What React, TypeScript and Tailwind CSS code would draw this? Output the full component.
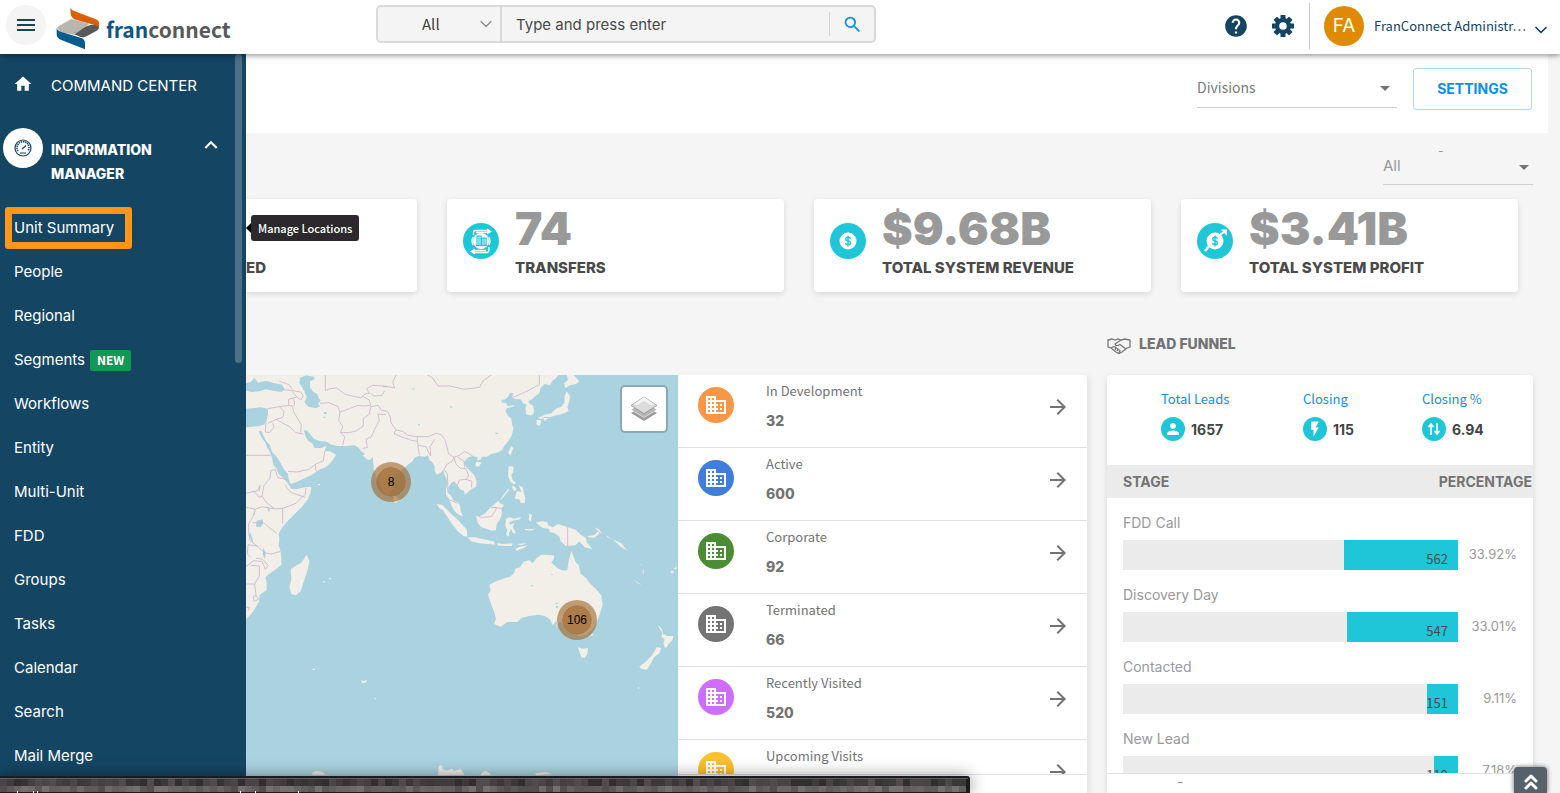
import React from 'react';
import {
  MdArrowDropDown,
  MdArrowForward,
  MdBusiness,
  MdFlashOn,
  MdHelp,
  MdHome,
  MdKeyboardArrowUp,
  MdMenu,
  MdPerson,
  MdSearch,
} from 'react-icons/md';
import { ChevronDown, ChevronsUp } from 'lucide-react';

const NAV_ITEMS = [
  'Unit Summary',
  'People',
  'Regional',
  'Segments',
  'Workflows',
  'Entity',
  'Multi-Unit',
  'FDD',
  'Groups',
  'Tasks',
  'Calendar',
  'Search',
  'Mail Merge',
];

const STATUSES = [
  { label: 'In Development', count: 32, color: 'bg-[#f89747]' },
  { label: 'Active', count: 600, color: 'bg-[#3f7edb]' },
  { label: 'Corporate', count: 92, color: 'bg-[#4b8d32]' },
  { label: 'Terminated', count: 66, color: 'bg-[#747474]' },
  { label: 'Recently Visited', count: 520, color: 'bg-[#cf6dff]' },
  { label: 'Upcoming Visits', color: 'bg-[#fbc02d]' },
];

const STAGES = [
  { label: 'FDD Call', count: 562, percent: 33.92 },
  { label: 'Discovery Day', count: 547, percent: 33.01 },
  { label: 'Contacted', count: 151, percent: 9.11 },
  { label: 'New Lead', count: 119, percent: 7.18 },
];

// Land masses, three units per pixel
const LAND = [
  // Eurasia and Africa
  'M0 0H940L928 14L918 22L912 34L896 30L884 42L880 58L868 66L858 76L846 82L852 90L862 96L864 116L858 124L842 122L838 104L842 92L830 86L824 76L808 76L798 70L802 58L792 56L788 66L778 76L766 78L768 86L780 86L784 96L804 94L802 98L784 102L778 112L786 126L796 134L798 148L802 164L798 182L788 200L776 214L768 228L752 236L736 240L722 248L708 248L704 256L694 260L694 250L680 246L668 250L658 258L654 266L660 278L672 290L684 302L692 322L690 338L676 346L666 354L656 362L654 350L642 346L634 334L624 322L616 326L608 340L606 356L616 366L622 380L634 384L642 394L644 410L650 426L640 424L626 412L616 394L610 376L600 362L600 346L604 330L602 316L596 304L592 288L584 296L572 302L566 292L566 276L558 264L550 258L546 244L536 248L518 246L504 252L500 262L488 270L478 280L460 294L444 304L440 322L440 344L430 358L424 366L414 356L404 334L392 310L384 290L382 270L380 248L372 258L362 256L350 244L358 240L346 232L338 222L326 214L300 216L272 216L252 210L244 204L240 216L236 232L252 232L270 242L262 256L250 270L240 280L222 286L210 294L196 304L172 314L152 324L134 330L128 316L126 300L114 286L104 268L92 248L78 234L72 214L60 200L52 184L46 170L38 172L46 190L58 206L64 222L72 234L78 252L82 272L92 284L98 300L112 312L124 326L136 344L152 346L176 340L196 338L194 354L186 374L170 396L150 416L128 438L112 456L98 478L100 496L98 514L104 532L106 552L106 572L92 584L74 596L58 610L62 628L62 648L50 656L40 664L40 682L28 702L14 722L0 736Z',
  // Madagascar
  'M182 542L190 562L186 584L176 614L164 652L150 664L136 660L130 640L136 616L134 586L152 574L166 566L174 554Z',
  // Sri Lanka
  'M442 364L454 368L460 378L448 388L442 380Z',
  // Sumatra
  'M572 390L588 392L604 408L620 424L636 438L650 454L662 466L664 488L652 486L634 470L618 450L604 428L592 410L580 402Z',
  // Java and the islands east of it
  'M664 490L686 490L706 494L724 498L742 502L748 512L724 510L700 508L676 502Z',
  'M754 508L772 510L800 508L798 516L772 516L754 514Z M812 510L842 508L826 514Z M808 524L822 518L846 514L834 522L812 530Z',
  // Borneo
  'M690 426L704 426L718 418L734 400L746 390L756 380L762 388L774 394L766 404L768 420L762 436L752 450L750 468L736 470L722 464L706 460L696 448Z',
  // Sulawesi
  'M780 434L790 430L804 434L826 430L822 436L800 440L788 446L794 452L806 446L800 458L810 478L802 478L794 464L790 476L788 488L780 482L784 468L778 456Z',
  // Moluccas
  'M850 418L858 424L854 444L848 436Z M836 464L850 466L870 464L856 470L838 468Z',
  // Philippines
  'M788 276L802 278L802 294L796 304L800 318L810 326L804 332L792 322L786 306Z M800 334L812 344L806 352L798 342Z M818 334L830 340L834 356L826 352Z M812 352L832 354L838 372L836 388L824 386L820 376L806 374Z M786 344L790 348L768 374L762 378Z',
  // Taiwan and Hainan
  'M796 216L802 222L794 244L786 236Z M690 264L706 264L700 278L688 276Z',
  // Papua
  'M870 446L884 442L904 444L906 454L920 460L936 450L966 460L990 468L1004 482L1020 492L1022 504L1040 526L1016 520L1000 502L988 514L960 516L944 502L940 488L926 478L912 474L908 464L890 462Z',
  'M1024 486L1044 484L1056 472L1060 480L1044 492L1028 490Z M1044 460L1060 466L1068 480L1060 474Z M1080 484L1098 496L1084 490Z M1100 496L1126 508L1144 530L1124 518Z',
  // Australia
  'M976 530L982 546L990 566L998 572L1004 600L1020 612L1030 626L1044 640L1052 648L1066 664L1070 692L1064 712L1056 736L1040 766L1020 782L1000 786L976 776L958 764L950 748L938 744L930 764L934 738L920 754L912 736L896 726L878 722L850 726L826 732L814 744L784 744L764 758L744 750L750 734L744 712L736 692L726 662L734 650L730 632L750 622L772 614L792 608L804 598L808 584L822 580L832 564L850 558L860 568L872 552L886 542L924 544L924 554L916 566L934 582L952 590L964 588L968 560Z',
  // Tasmania
  'M996 820L1012 824L1026 822L1024 840L1016 852L1006 850Z M1030 784L1040 778L1040 786Z',
  // New Zealand
  'M1234 752L1246 762L1252 780L1264 786L1282 786L1280 798L1268 810L1258 824L1252 808L1256 796L1246 788L1250 778Z M1232 820L1246 822L1240 838L1224 850L1214 870L1202 888L1186 884L1180 878L1202 860L1218 844Z',
  // Japan
  'M962 0L980 0L1000 22L990 30L972 34L958 42L954 28L966 18Z M962 52L972 66L970 82L964 98L968 112L948 120L930 124L912 130L896 128L886 136L876 132L896 122L916 118L930 104L946 98L956 84L956 66Z M872 138L886 138L882 156L872 152Z M892 132L906 132L896 142Z',
  // Scattered islands
  'M1160 614L1186 632L1178 630Z M1274 592L1284 590L1282 598L1274 596Z M1282 584L1294 578L1290 586Z M346 918L352 922L362 918L360 926L348 928Z M1184 566L1188 576L1184 572Z M1192 584L1194 604L1190 590Z M216 330H222V333H216Z M232 622H237V626H232Z M249 612H254V616H249Z M200 884H206V888H200Z M386 972H390V976H386Z M1176 940H1179V944H1176Z M34 116L50 114L46 122L38 122Z',
  // Antarctic coast
  'M198 1196L210 1191L228 1193L238 1202L200 1202Z M576 1204L578 1176L588 1174L590 1186L602 1190L618 1184L624 1190L642 1186L640 1178L646 1188L656 1202Z M706 1196L718 1190L732 1198L734 1204L704 1204Z M868 1197L900 1194L918 1200L870 1204Z',
];

// Seas and lakes lying inside the land masses
const WATER = [
  'M0 28L14 24L26 12L36 26L60 20L80 26L108 32L116 46L106 54L80 50L60 46L40 52L18 54L0 50Z',
  'M0 104L24 102L44 100L66 104L66 120L62 140L54 152L40 156L20 158L0 160Z',
  'M162 12L180 4L204 8L206 16L192 22L192 40L202 54L214 60L216 68L224 80L216 88L222 98L208 102L188 98L176 86L182 68L176 54L168 40L160 26Z',
  'M174 168L184 170L194 182L204 194L222 202L236 202L248 206L238 216L226 222L206 222L198 208L186 200L178 186Z',
  'M32 440L50 436L52 448L44 460L30 458Z M66 398L72 408L68 414L64 404Z M12 472L22 502L18 504L10 486Z M52 520L60 540L56 556L50 540Z M22 420L28 414L26 424Z',
  'M234 114H242V120H234Z M232 128H238V132H232Z M410 36L426 36L420 40H410Z M608 96L620 98L616 102Z M498 44L506 42L502 48Z M516 150H522V154H516Z M748 176H756V180H748Z M854 634H862V637H854Z M916 600H920V603H916Z M928 686H935V690H928Z M930 696H936V702H930Z',
];

const BORDERS =
  'M0 244H74 M100 22L130 32L140 50L164 54L172 66L164 78L148 64L136 50L110 46 M238 0L238 50L252 44L272 42L296 60L318 66L346 72L356 60L370 58L362 44L380 34L416 36L446 42L440 24L452 0 M222 88L250 86L276 98L282 114L310 104L336 94L356 96L374 94L370 78L348 66 M374 58L384 66L408 64L416 50 M282 114L278 140L290 156L284 176L310 176L332 170L352 156L352 134L370 120L374 98 M284 176L296 188L290 214 M374 98L396 94L406 108L424 112L434 130L434 144 M396 120L400 140L386 166L376 188L360 196L364 220L350 224 M396 120L420 122 M434 144L450 168L444 178L470 190L500 200L514 202L514 188L486 184L470 172L450 168 M514 188L546 188L570 178L586 182L596 196L602 214L608 240L624 250L640 244L656 232L680 246 M514 202L520 244 M516 214L540 218L546 232L554 246L552 218L566 196 M624 250L618 262L604 270L594 286L604 300L606 356 M624 250L630 270L642 282L660 284L668 306L660 316L640 318L634 334 M660 316L678 322L676 340 M636 250L654 262L656 280 M540 0L560 12L576 36L612 36L656 46L700 40L712 20L740 0 M800 70L816 64L846 50L880 32L880 0 M66 104L100 98L128 94L140 96L142 112L166 152L164 176 M128 94L128 76L150 70 M100 98L114 112L110 130L90 136L66 148 M60 146L58 174L70 176L84 160L80 148 M90 136L130 158L150 176L172 180 M126 292L154 294L188 286L210 270L232 260L236 232 M208 272L210 292 M74 290L88 286L94 308 M74 290L72 312L54 334L48 366L60 384L84 404L108 404L150 388L178 360L180 342 M118 334L124 344L136 356L178 370 M94 310L124 318 M48 366L40 370L24 352L0 358 M40 352L42 334L34 350L20 354 M84 404L48 398L28 406L0 400 M110 404L110 448 M28 406L20 430L8 450L8 474L12 500L34 516L54 536L76 540L104 532 M54 446L66 458L92 478 M20 446L52 446 M34 516L6 512L4 540L14 550 M30 552L50 556L66 574L58 586L48 562L22 560L0 578 M14 574L40 576L40 606L26 630L0 630 M26 630L30 664L38 676L24 682L22 668L32 664 M0 700L10 700L6 710 M140 74L146 84L144 96 M735 402L752 400L748 410L736 428L706 430L696 426 M740 400L774 404 M965 460V516 M612 378L634 388';

const SHADES = ['#3f3b3a', '#4a4645', '#363333', '#45403f', '#312e2e', '#514c4b', '#3b3838', '#484444'];
const LIGHTER_SHADES = ['#5f5f5f', '#6b6b6b', '#585858', '#666666', '#4f4f4f', '#717171', '#5b5b5b', '#626262'];

function pickShade(shades: string[], seed: number) {
  const noise = Math.abs(Math.sin(seed * 12.9898) * 43758.5453);
  return shades[Math.floor((noise % 1) * shades.length)];
}

function Logo() {
  return (
    <a href="#home" aria-label="franconnect" className="flex items-center gap-[6px]">
      <svg width="44" height="44" viewBox="0 0 132 132" className="mt-2" aria-hidden="true">
        <path d="M3 62Q6 58 14 54L46 36L100 50L58 84L14 76Z" fill="#b9b6ae" />
        <path d="M56 82L84 62Q92 56 104 54L129 50V62Q129 67 122 71L92 88Q84 93 74 90Z" fill="#58595b" />
        <path d="M43 2Q46 9 56 13L118 36Q129 40 129 48V64Q127 57 116 54L62 39Q46 35 44 20Z" fill="#d95f02" />
        <path d="M2 62Q4 71 16 75L74 92Q87 96 87 108V127L18 100Q2 94 2 82Z" fill="#075a8c" />
      </svg>
      <span className="pt-2 font-['Noto_Sans_CJK_SC','Open_Sans',sans-serif] text-[21px] leading-8 font-bold">
        <span className="text-[#0b5687]">fran</span>
        <span className="text-[#58595b]">connect</span>
      </span>
    </a>
  );
}

function GearIcon() {
  return (
    <svg width="22" height="22" viewBox="0 0 22 22" aria-hidden="true">
      <g fill="currentColor">
        {[0, 45, 90, 135].map((angle) => (
          <rect key={angle} x="8.500" y="0" width="5" height="22" rx=".6" transform={`rotate(${angle} 11 11)`} />
        ))}
        <circle cx="11" cy="11" r="8" />
      </g>
      <circle cx="11" cy="11" r="3.800" fill="#fff" />
    </svg>
  );
}

function GaugeIcon() {
  return (
    <svg width="18" height="18" viewBox="0 0 18 18" fill="none" stroke="#144664" aria-hidden="true">
      <circle cx="9" cy="9" r="8" strokeWidth="1.2" />
      <path d="M4 12A6 6 0 1 1 14 12" strokeWidth="1.6" strokeDasharray="1.4 .7" />
      <path d="M8 10L12 6.500" strokeWidth="1.3" />
      <path d="M6 14H12" />
    </svg>
  );
}

function TopBar() {
  return (
    <header className="relative z-30 flex h-[54px] shrink-0 items-center justify-between bg-white shadow-[0_1px_6px_rgba(0,0,0,0.5)]">
      <div className="mb-1 flex w-[376px] shrink-0 items-center gap-[10px] pl-[6px]">
        <button
          type="button"
          aria-label="Menu"
          className="flex h-10 w-10 items-center justify-center rounded-full bg-[#f4f4f4] text-[#144664]"
        >
          <MdMenu size={24} />
        </button>
        <Logo />
      </div>

      <form className="mb-[6px] flex h-[38px] w-[500px] shrink-0 items-center rounded-[5px] border-2 border-[#dadada] bg-[#f4f4f4] text-[#3f3f3f]">
        <div className="relative flex h-full w-[124px] items-center border-r-2 border-[#dadada]">
          <select
            aria-label="Search in"
            className="h-full w-full appearance-none bg-transparent pl-[44px] font-['Noto_Sans_CJK_SC',sans-serif] text-[15px] outline-none"
          >
            <option>All</option>
          </select>
          <ChevronDown size={20} strokeWidth={1.500} className="pointer-events-none absolute right-1 text-[#8a8a8a]" />
        </div>
        <input
          type="text"
          aria-label="Search"
          placeholder="Type and press enter"
          className="h-full min-w-0 flex-1 bg-transparent px-[14px] text-[15px] outline-none placeholder:text-[#4a4a4a]"
        />
        <button
          type="submit"
          aria-label="Search"
          className="flex h-6 w-[45px] items-center justify-center border-l border-[#d6d6d6] text-[#0a8ff0]"
        >
          <MdSearch size={21} />
        </button>
      </form>

      <div className="mb-[2px] flex flex-1 items-center justify-end text-[#144664]">
        <button type="button" aria-label="Help" className="mr-[23px]">
          <MdHelp size={26} />
        </button>
        <button type="button" aria-label="Settings" className="mr-[15px]">
          <GearIcon />
        </button>
        <button type="button" className="flex h-[46px] items-center border-l border-[#c9c9c9] pr-[9px] pl-[14px]">
          <span className="flex h-10 w-10 items-center justify-center rounded-full bg-[#df8a00] text-[19px] text-white">
            FA
          </span>
          <span className="ml-[10px] w-[157px] text-left font-['Noto_Sans_CJK_SC',sans-serif] text-[13px]">
            FranConnect Administr…
          </span>
          <ChevronDown size={20} strokeWidth={2} className="mt-2" />
        </button>
      </div>
    </header>
  );
}

function Sidebar() {
  return (
    <aside className="relative z-20 w-[246px] shrink-0 bg-[#144664] text-[15px] text-white">
      <nav aria-label="Main">
        <a href="#command-center" className="flex h-[64px] items-center">
          <MdHome size={20} className="mr-[18px] mb-1 ml-[13px]" />
          COMMAND CENTER
        </a>
        <button type="button" className="mt-[10px] flex h-[66px] w-[224px] items-start text-left" aria-expanded="true">
          <span className="ml-[3px] flex h-10 w-10 shrink-0 items-center justify-center rounded-full bg-white">
            <GaugeIcon />
          </span>
          <span className="mt-[10px] ml-2 flex-1 text-[14px] leading-6 font-extrabold">
            INFORMATION
            <br />
            MANAGER
          </span>
          <MdKeyboardArrowUp size={26} className="mt-1 shrink-0" />
        </button>
        <ul className="mt-[12px]">
          {NAV_ITEMS.map((item, index) => (
            <li key={item} className="relative flex h-11 items-center">
              {index === 0 ? (
                <a
                  href="#unit-summary"
                  className="ml-[5px] flex h-[42px] w-[127px] items-center rounded-[3px] border-[7px] border-[#ff9619] pl-[2px] whitespace-nowrap"
                >
                  {item}
                </a>
              ) : (
                <a href={`#${item.toLowerCase()}`} className="pl-[14px]">
                  {item}
                </a>
              )}
              {item === 'Segments' && (
                <span className="ml-[5px] flex h-[21px] items-center rounded-[2px] bg-[#109854] px-[7px] font-['Noto_Sans_CJK_SC',sans-serif] text-[12px] font-bold">
                  NEW
                </span>
              )}
              {index === 0 && (
                <span
                  role="tooltip"
                  className="absolute left-[251px] flex h-[26px] items-center rounded-[3px] bg-[#2b292b] px-[7px] font-['Noto_Sans_CJK_SC',sans-serif] text-[11px] font-medium whitespace-nowrap"
                >
                  <span className="absolute -left-[5px] h-0 w-0 border-y-[5px] border-r-[5px] border-y-transparent border-r-black" />
                  Manage Locations
                </span>
              )}
            </li>
          ))}
        </ul>
      </nav>
      <div className="absolute top-0 right-1 h-[309px] w-[7px] rounded-full bg-[#4c7087]" />
    </aside>
  );
}

function TransferIcon() {
  return (
    <svg width="36" height="36" viewBox="0 0 36 36" aria-hidden="true">
      <circle cx="18" cy="18" r="18" fill="#1fc6d8" />
      <circle cx="18" cy="18" r="8" fill="#fff" />
      <g fill="none" stroke="#fff" strokeWidth="1.300">
        <path d="M10.500 12V9.500Q10.500 7.500 12.500 7.500H25V9.500H13" />
        <path d="M26 24V26.500Q26 29.500 24 29.500H11V27.500H23" />
        <path d="M10 14Q8 18 10 22M26 14Q28 18 26 22" />
      </g>
      <path d="M24 5.500L29 8.500L24 11.500ZM12 25.500L7 28.500L12 31.500Z" fill="#fff" />
      <g stroke="#1fc6d8" strokeWidth="1.200" fill="none">
        <path d="M14 22V13H18V22M19 22V15H23V22M13 22.500H24M16 13V22M21 15V22" />
      </g>
    </svg>
  );
}

function MoneyIcon({ growing }: { growing?: boolean }) {
  return (
    <svg width="36" height="36" viewBox="0 0 36 36" aria-hidden="true">
      <circle cx="18" cy="18" r="18" fill="#1fc6d8" />
      {growing && (
        <g stroke="#fff" fill="none">
          <path d="M8 28L12 23" strokeWidth="2.600" />
          <path d="M23 12L28 8" strokeWidth="2.200" />
          <path d="M24 6.500H30V13Z" fill="#fff" stroke="none" />
        </g>
      )}
      <circle cx="18" cy="18" r="8.500" fill="#fff" />
      <path
        d="M20.500 15.700Q20 14.300 18 14.300Q15.700 14.300 15.700 16.100Q15.700 17.600 18 18Q20.500 18.400 20.500 20Q20.500 21.800 18 21.800Q15.800 21.800 15.500 20.200M18 12.500V23.500"
        fill="none"
        stroke="#1fc6d8"
        strokeWidth="1.400"
      />
    </svg>
  );
}

interface StatCardProps {
  value: string;
  label: string;
  icon: React.ReactNode;
}

function StatCard({ value, label, icon }: StatCardProps) {
  return (
    <div className="flex h-[93px] min-w-0 flex-1 rounded-[4px] bg-white pl-4 shadow-[0_2px_6px_rgba(0,0,0,0.12)]">
      <div className="mt-6 shrink-0">{icon}</div>
      <div className="ml-4 whitespace-nowrap">
        <div className="mt-1 text-[46px] leading-[50px] font-black text-[#999]">{value}</div>
        <div className="mt-1 text-[15px] leading-[22px] font-extrabold text-[#4a4a4a]">{label}</div>
      </div>
    </div>
  );
}

function LayersIcon() {
  return (
    <svg width="28" height="28" viewBox="0 0 28 28" aria-hidden="true">
      <path d="M1 18L14 10L27 18L14 26Z" fill="#9b9b9b" />
      <path d="M1 14.500L14 7L27 14.500L14 22.500Z" fill="#b5b5b5" stroke="#fff" strokeWidth=".6" />
      <path d="M1 10.500L14 2L27 10.500L14 18.500Z" fill="#dcdcdc" stroke="#8f8f8f" strokeWidth=".8" />
      <path d="M3 9.500L14 2L25 9.500L21 10L14 6L7 10Z" fill="#f3f3f3" />
    </svg>
  );
}

function LocationMap() {
  return (
    <div className="relative min-w-0 flex-1 overflow-hidden bg-[#aad3df]">
      <svg className="block h-full w-full" viewBox="0 3 1296 1254" preserveAspectRatio="xMinYMin slice" aria-hidden="true">
        <g fill="#f2efe9">
          {LAND.map((d) => (
            <path key={d} d={d} />
          ))}
        </g>
        <g fill="#aad3df">
          {WATER.map((d) => (
            <path key={d} d={d} />
          ))}
        </g>
        <path d={BORDERS} fill="none" stroke="#c9b3c6" strokeWidth="2.400" />
      </svg>

      <div className="absolute top-[87px] left-[125px] flex h-10 w-10 items-center justify-center rounded-full border-5 border-[#9f6426]/60 bg-[#a0682f]/85 bg-clip-padding font-['Liberation_Sans',sans-serif] text-[12px] text-black">
        8
      </div>
      <div className="absolute top-[225px] left-[311px] flex h-10 w-10 items-center justify-center rounded-full border-5 border-[#9f6426]/60 bg-[#a0682f]/85 bg-clip-padding font-['Liberation_Sans',sans-serif] text-[12px] text-black">
        106
      </div>
      <button
        type="button"
        aria-label="Layers"
        className="absolute top-[10px] right-[10px] flex h-12 w-12 items-center justify-center rounded-[5px] border-2 border-[#87aab4] bg-white"
      >
        <LayersIcon />
      </button>
    </div>
  );
}

function StatusList() {
  return (
    <div className="flex w-[409px] shrink-0 flex-col rounded-tr-[4px] bg-white shadow-[3px_2px_6px_rgba(0,0,0,0.08)]">
      <ul className="min-h-0 flex-1 overflow-hidden">
        {STATUSES.map((status) => (
          <li key={status.label} className="flex h-[73px] border-b border-[#e0e0e0] pr-[17px] pl-5 text-[#737373]">
            <span className={`mt-3 flex h-9 w-9 shrink-0 items-center justify-center rounded-full text-white ${status.color}`}>
              <MdBusiness size={24} />
            </span>
            <div className="ml-8 flex-1 pt-[6px]">
              <div className="font-['Noto_Sans_CJK_SC',sans-serif] text-[13px] leading-5">{status.label}</div>
              {status.count && <div className="mt-[10px] text-[14px] leading-5 font-extrabold">{status.count}</div>}
            </div>
            <a href="#details" aria-label={`Open ${status.label}`} className="mt-5">
              <MdArrowForward size={24} />
            </a>
          </li>
        ))}
      </ul>
      <div className="h-[19px] shrink-0 border-t border-[#e0e0e0]" />
    </div>
  );
}

function HandshakeIcon() {
  return (
    <svg width="24" height="18" viewBox="0 0 24 18" fill="none" stroke="#777" strokeWidth="1.300" className="mt-1" aria-hidden="true">
      <path d="M1 3L5 2L8 3L11 2L14 3L18 2L23 3V10L20 11L15 15L12 16.500L9 15L4 11L1 10Z" />
      <path d="M14 3L8 7Q9 10 13 7.500L19 12M4 11L7 9.500L9 10.500L8 13M9 11L11 12L10 14M11 12.500L13 13.500L12 16" />
    </svg>
  );
}

function ArrowsIcon() {
  return (
    <svg width="14" height="14" viewBox="0 0 14 14" fill="none" stroke="#fff" strokeWidth="1.700" aria-hidden="true">
      <path d="M4 13V2M1.500 5L4 2L6.500 5M10 1V12M7.500 9L10 12L12.500 9" />
    </svg>
  );
}

interface LeadStatProps {
  label: string;
  value: string;
  icon: React.ReactNode;
}

function LeadStat({ label, value, icon }: LeadStatProps) {
  return (
    <div>
      <a href="#leads" className="block font-['Noto_Sans_CJK_SC',sans-serif] text-[13px] leading-5 text-[#0a8ff0]">
        {label}
      </a>
      <div className="mt-2 flex items-center text-[14px] font-bold text-[#444]">
        <span className="mr-[6px] flex h-6 w-6 items-center justify-center rounded-full bg-[#1fc6d8] text-white">
          {icon}
        </span>
        {value}
      </div>
    </div>
  );
}

function LeadFunnel() {
  return (
    <section className="flex w-[426px] shrink-0 flex-col">
      <h2 className="flex h-[83px] items-center gap-2 pt-5 text-[14px] font-extrabold text-[#737373]">
        <HandshakeIcon />
        LEAD FUNNEL
      </h2>
      <div className="flex min-h-0 flex-1 flex-col rounded-t-[4px] bg-white shadow-[0_2px_6px_rgba(0,0,0,0.12)]">
        <div className="min-h-0 flex-1 overflow-hidden">
          <div className="grid h-[90px] grid-cols-[142px_119px_1fr] pt-[14px] pl-[54px]">
            <LeadStat label="Total Leads" value="1657" icon={<MdPerson size={18} />} />
            <LeadStat label="Closing" value="115" icon={<MdFlashOn size={18} />} />
            <LeadStat label="Closing %" value="6.94" icon={<ArrowsIcon />} />
          </div>
          <table className="w-full table-fixed text-[14px]">
            <colgroup>
              <col />
              <col className="w-[45px]" />
              <col className="w-[75px]" />
            </colgroup>
            <thead>
              <tr className="h-[33px] bg-[#ebebeb] font-extrabold text-[#737373]">
                <th scope="col" className="pl-4 text-left">STAGE</th>
                <th scope="col" colSpan={2} className="pr-px text-right">PERCENTAGE</th>
              </tr>
            </thead>
            <tbody>
              {STAGES.map((stage) => (
                <tr key={stage.label} className="h-[72px] text-[#999]">
                  <td colSpan={2} className="pl-4 align-bottom">
                    <div className="mb-[7px] leading-5">{stage.label}</div>
                    <div className="flex h-[30px] justify-end bg-[#ebebeb]">
                      <div
                        className="flex h-full items-end justify-end bg-[#1fc6d8] pr-[10px] pb-px font-['Noto_Sans_CJK_SC',sans-serif] text-[13px] leading-5 text-[#4a4a4a]"
                        style={{ width: `${stage.percent}%` }}
                      >
                        {stage.count}
                      </div>
                    </div>
                  </td>
                  <td className="pr-4 pb-[6px] text-right align-bottom text-[13px] leading-5">{stage.percent.toFixed(2)}%</td>
                </tr>
              ))}
            </tbody>
          </table>
        </div>
        <div className="h-5 shrink-0 border-t border-[#e0e0e0] pl-[70px] text-[14px] leading-4 text-[#999]">-</div>
      </div>
    </section>
  );
}

// Pixelated strip that covers the bottom-left of the window
function MosaicBar() {
  return (
    <div className="absolute bottom-0 left-0 z-40 h-[17px] w-[970px] overflow-hidden rounded-tr-[3px] bg-[#1d1b1b] shadow-[0_0_16px_rgba(0,0,0,0.45)]">
      <svg width="970" height="17" viewBox="0 0 970 17" aria-hidden="true">
        <rect y="2" width="968" height="1" fill="#56616a" />
        {Array.from({ length: 138 }, (_, i) => (
          <g key={i}>
            <rect x={i * 7} y="3" width="7" height="7" fill={pickShade(SHADES, i + 1)} />
            <rect x={i * 7} y="10" width="7" height="6" fill={pickShade(LIGHTER_SHADES, i + 200)} />
          </g>
        ))}
        <path d="M17 16H18M33 16H34M37 16H38M240 16H241M255 16H256M298 16H299" stroke="#fff" strokeWidth="2" />
      </svg>
    </div>
  );
}

export default function App() {
  return (
    <div className="relative flex h-screen flex-col overflow-hidden bg-[#f5f5f5] font-['Inter',sans-serif]">
      <TopBar />
      <div className="flex min-h-0 flex-1">
        <Sidebar />
        <main className="flex min-w-0 flex-1 flex-col">
          <div className="mr-3 flex h-[79px] shrink-0 justify-end bg-white pt-[14px] pr-4">
            <div className="relative mr-4 h-10 w-[200px] border-b border-[#cfcfcf]">
              <select
                aria-label="Divisions"
                className="h-full w-full appearance-none bg-transparent font-['Noto_Sans_CJK_SC',sans-serif] text-[14px] text-[#7a7a7a] outline-none"
              >
                <option>Divisions</option>
              </select>
              <MdArrowDropDown size={24} className="pointer-events-none absolute top-2 right-0 text-[#737373]" />
            </div>
            <button
              type="button"
              className="h-[42px] w-[119px] rounded-[3px] border border-[#b9d3e8] pb-px text-[14px] font-bold text-[#0a8ff0]"
            >
              SETTINGS
            </button>
          </div>

          <div className="relative mt-4 mr-[27px] ml-auto h-9 w-[150px] shrink-0 border-b border-[#cfcfcf] text-[#999]">
            <span className="absolute -top-[6px] left-[55px] text-[12px] leading-4">-</span>
            <select
              aria-label="Period"
              className="h-full w-full appearance-none bg-transparent text-[15px] outline-none"
            >
              <option>All</option>
            </select>
            <MdArrowDropDown size={24} className="pointer-events-none absolute top-[6px] -right-[3px] text-[#737373]" />
          </div>

          <div className="mt-[14px] mr-[42px] flex shrink-0 gap-[30px]">
            <div className="h-[93px] w-[171px] shrink-0 rounded-r-[4px] bg-white pt-[58px] text-[15px] leading-[22px] font-extrabold text-[#4a4a4a] shadow-[0_2px_6px_rgba(0,0,0,0.12)]">
              ED
            </div>
            <StatCard value="74" label="TRANSFERS" icon={<TransferIcon />} />
            <StatCard value="$9.68B" label="TOTAL SYSTEM REVENUE" icon={<MoneyIcon />} />
            <StatCard value="$3.41B" label="TOTAL SYSTEM PROFIT" icon={<MoneyIcon growing />} />
          </div>

          <div className="mr-[27px] flex min-h-0 flex-1 gap-5">
            <section className="mt-[83px] flex min-w-0 flex-1">
              <LocationMap />
              <StatusList />
            </section>
            <LeadFunnel />
          </div>
        </main>
      </div>

      <MosaicBar />
      <button
        type="button"
        aria-label="Back to top"
        className="absolute right-[13px] bottom-0 z-40 flex h-[26px] w-[33px] items-center justify-center rounded-t-[4px] bg-[#56626b] pt-1 text-white shadow-[0_0_5px_rgba(0,0,0,0.6)]"
      >
        <ChevronsUp size={24} strokeWidth={3} />
      </button>
    </div>
  );
}
